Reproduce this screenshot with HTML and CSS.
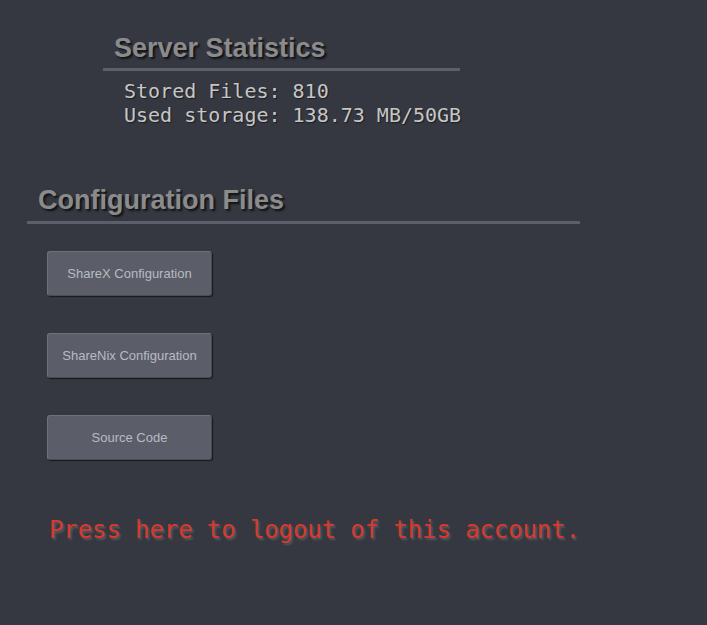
FILE: index.html
```html
<!DOCTYPE html>
<html>
<head>
<meta charset="utf-8">
<link rel="stylesheet" href="styles.css">
</head>
<body>
<main class="page">
  <section class="stats">
    <h2 class="heading stats-heading">Server Statistics</h2>
    <div class="rule"></div>
    <div class="stats-lines">
      <div>Stored Files: 810</div>
      <div>Used storage: 138.73 MB/50GB</div>
    </div>
  </section>
  <section class="config">
    <h2 class="heading config-heading">Configuration Files</h2>
    <div class="rule"></div>
    <div class="buttons">
      <button class="btn">ShareX Configuration</button>
      <button class="btn">ShareNix Configuration</button>
      <button class="btn">Source Code</button>
    </div>
  </section>
  <a class="logout">Press here to logout of this account.</a>
</main>
</body>
</html>
```
FILE: styles.css
```css
html, body {
  margin: 0;
  padding: 0;
  background: #353840;
  height: 100%;
}
.page {
  display: flex;
  flex-direction: column;
  align-items: flex-start;
}
.heading {
  margin: 0;
  font-family: "Liberation Sans", Arial, sans-serif;
  font-weight: bold;
  font-size: 27px;
  line-height: 31px;
  color: #8b8b8b;
  text-shadow: 2px 2px 2px #111216;
}
.rule {
  height: 3px;
  background: #5c5f69;
}
.stats {
  margin-left: 103px;
  margin-top: 33px;
  width: 357px;
}
.stats-heading {
  padding-left: 11px;
}
.stats .rule {
  margin-top: 4px;
}
.stats-lines {
  padding-left: 21px;
  margin-top: 8px;
  font-family: "DejaVu Sans Mono", monospace;
  font-size: 20px;
  line-height: 24px;
  color: #c6c6c6;
  text-shadow: 1px 1px 1px #1c1d22;
  white-space: nowrap;
}
.config {
  margin-left: 27px;
  margin-top: 58px;
  width: 553px;
}
.config-heading {
  padding-left: 11px;
}
.config .rule {
  margin-top: 5px;
}
.buttons {
  display: flex;
  flex-direction: column;
  align-items: flex-start;
  gap: 37px;
  margin-top: 27px;
  padding-left: 20px;
}
.btn {
  width: 165px;
  height: 45px;
  background: #5b5e69;
  border: 1px solid #6e717b;
  border-right-color: #4a4c55;
  border-bottom-color: #4a4c55;
  border-radius: 3px;
  box-shadow: 1px 1px 1px #18191d;
  color: #b8bbc2;
  font-family: "Liberation Sans", Arial, sans-serif;
  font-size: 13px;
  padding: 0;
}
.logout {
  margin-left: 49px;
  margin-top: 55px;
  font-family: "DejaVu Sans Mono", monospace;
  font-size: 24px;
  line-height: 30px;
  letter-spacing: -0.1px;
  color: #d8392c;
  text-shadow: 2px 2px 2px #55585f;
  white-space: nowrap;
}
```
